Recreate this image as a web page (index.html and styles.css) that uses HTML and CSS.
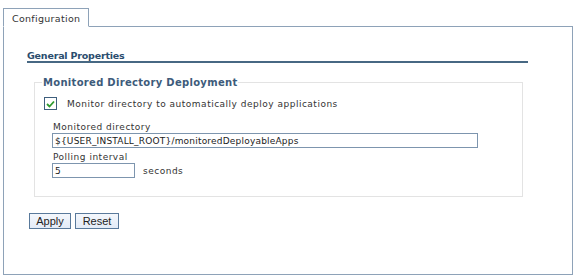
FILE: index.html
```html
<!DOCTYPE html>
<html lang="en">
<head>
    <meta charset="UTF-8">
    <title>Configuration</title>
    <link rel="stylesheet" href="styles.css">
</head>
<body>
    <div class="tabs">
        <div class="tab">Configuration</div>
    </div>

    <div class="panel">
        <h3 class="section-title">General Properties</h3>

        <fieldset class="group">
            <legend>Monitored Directory Deployment</legend>

            <div class="check-row">
                <span class="checkbox">
                    <svg width="9" height="8" viewBox="0 0 9 8">
                        <path d="M1 4 L3.5 6.5 L8 1.5" fill="none" stroke="#2e9a2e" stroke-width="1.8"/>
                    </svg>
                </span>
                <span class="check-label">Monitor directory to automatically deploy applications</span>
            </div>

            <label class="field-label" for="dir">Monitored directory</label>
            <input class="field wide" type="text" id="dir" value="${USER_INSTALL_ROOT}/monitoredDeployableApps">

            <label class="field-label second" for="interval">Polling interval</label>
            <div class="inline-row">
                <input class="field short" type="text" id="interval" value="5">
                <span class="unit">seconds</span>
            </div>
        </fieldset>

        <div class="buttons">
            <button type="button">Apply</button>
            <button type="button">Reset</button>
        </div>
    </div>
</body>
</html>
```

FILE: styles.css
```css
* {
    margin: 0;
    padding: 0;
    box-sizing: border-box;
}

body {
    font-family: 'DejaVu Sans', Verdana, sans-serif;
    font-size: 9px;
    letter-spacing: 0.5px;
    color: #222;
    background: #fff;
    width: 578px;
    height: 280px;
    overflow: hidden;
}

/* Tab strip */
.tabs {
    display: flex;
    padding: 8px 0 0 3px;
}

.tab {
    position: relative;
    z-index: 1;
    width: 86px;
    height: 19px;
    margin-bottom: -1px;
    padding: 4px 0 0 8px;
    border: 1px solid #8ea2b8;
    border-bottom: 1px solid #fff;
    background: #fff;
    font-size: 9.5px;
    letter-spacing: 0.3px;
    color: #333;
}

/* Main panel */
.panel {
    margin: 0 5px 0 3px;
    height: 249px;
    border: 1px solid #8ea2b8;
    padding: 23px 44px 0 23px;
}

.section-title {
    font-size: 9.5px;
    line-height: 11px;
    font-weight: bold;
    letter-spacing: -0.2px;
    color: #2b4d6e;
    border-bottom: 2px solid #476883;
}

.group {
    margin: 14px 5px 0 7px;
    height: 120px;
    border: 1px solid #e3e3e3;
    padding: 0 0 0 18px;
}

.group legend {
    margin-left: -11px;
    padding: 0 1px;
    font-size: 10px;
    font-weight: bold;
    letter-spacing: 0.3px;
    color: #3d5b7b;
}

.check-row {
    display: flex;
    align-items: center;
    margin: 9px 0 0 -9px;
}

.checkbox {
    display: flex;
    align-items: center;
    justify-content: center;
    width: 13px;
    height: 13px;
    border: 1px solid #3e5f7d;
    background: #fff;
}

.check-label {
    margin-left: 10px;
    color: #333;
}

.field-label {
    display: block;
    margin-top: 12px;
    line-height: 11px;
    color: #333;
}

.field-label.second {
    margin-top: 4px;
}

.field {
    display: block;
    height: 15px;
    border: 1px solid #7d95ae;
    padding: 0 0 0 2px;
    font-family: 'DejaVu Sans', sans-serif;
    font-size: 9px;
    letter-spacing: 0.2px;
    color: #222;
    background: #fff;
}

.field.wide {
    width: 426px;
    margin-left: -1px;
}

.field.short {
    width: 83px;
}

.inline-row {
    display: flex;
    align-items: center;
    margin-left: -1px;
}

.unit {
    margin-left: 8px;
    color: #333;
}

/* Buttons */
.buttons {
    display: flex;
    gap: 4px;
    margin: 16px 0 0 2px;
}

button {
    height: 16px;
    padding: 0 6px;
    font-family: 'Liberation Sans', Arial, sans-serif;
    font-size: 11px;
    letter-spacing: 0;
    color: #222;
    background: linear-gradient(#f4f7fc, #e3ebf7);
    border: 1px solid #59799b;
    cursor: pointer;
}

button:first-child {
    width: 42px;
}

button:last-child {
    width: 44px;
}
```
